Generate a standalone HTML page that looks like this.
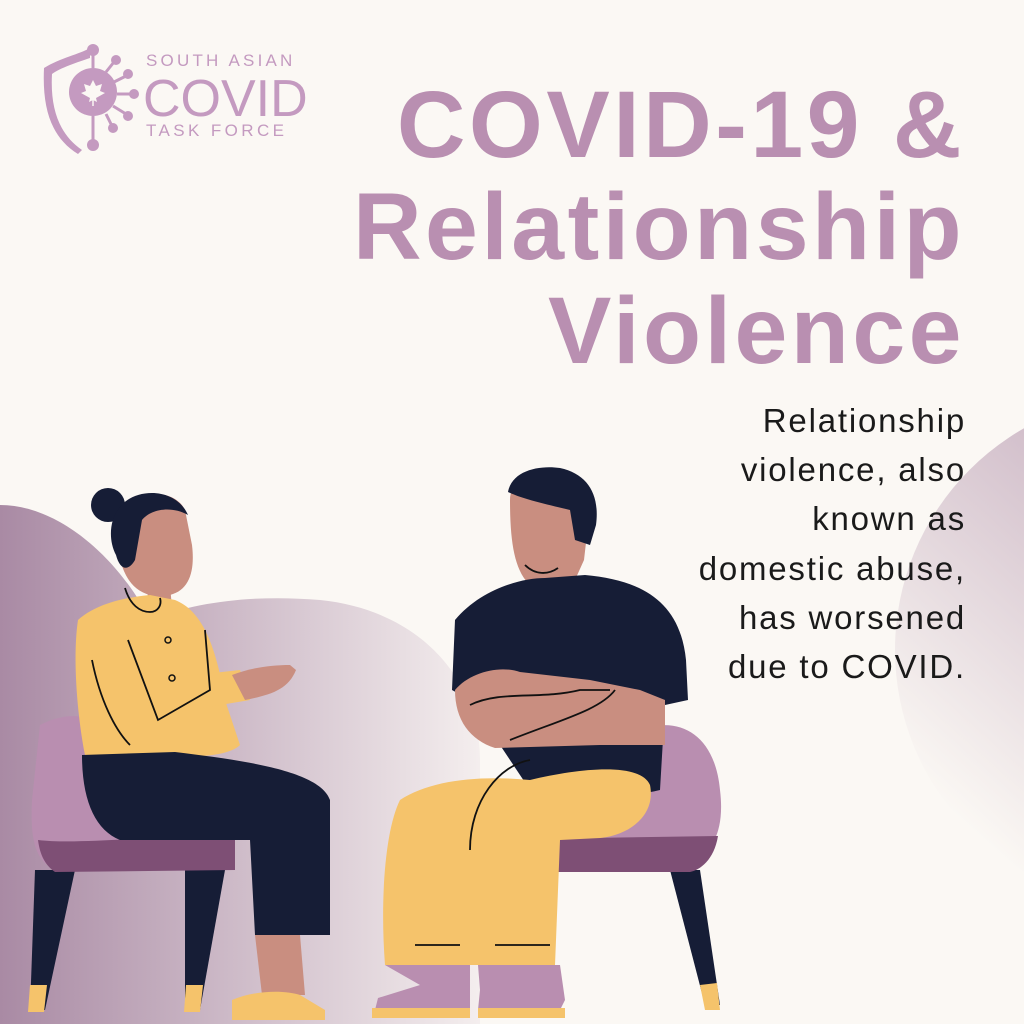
<!DOCTYPE html>
<html><head><meta charset="utf-8"><style>
html,body{margin:0;padding:0}
body{width:1024px;height:1024px;background:#fbf8f4;position:relative;overflow:hidden;font-family:"Liberation Sans",sans-serif}
svg{position:absolute;left:0;top:0}
.t{position:absolute;right:59px;text-align:right;color:#b98fb1;font-weight:bold;font-size:95px;letter-spacing:3.5px;line-height:1;white-space:nowrap}
.b{position:absolute;right:58px;top:396px;text-align:right;font-size:33px;letter-spacing:1.8px;line-height:49.2px;color:#1a1a1a}
.lg{position:absolute;color:#c49ac0;white-space:nowrap}
</style></head><body>
<svg width="1024" height="1024" viewBox="0 0 1024 1024">
<defs>
<linearGradient id="g1" x1="0" x2="1" y1="0" y2="0"><stop offset="0" stop-color="#a98aa4"/><stop offset="1" stop-color="#f4eeee"/></linearGradient>
<linearGradient id="g2" x1="1" y1="0" x2="0.2" y2="0.9"><stop offset="0" stop-color="#b191aa"/><stop offset="1" stop-color="#fbf8f4"/></linearGradient>
</defs>
<circle cx="1150" cy="650" r="255" fill="url(#g2)"/>
<path d="M0 505 C60 505 120 560 150 620 C200 600 260 595 320 600 C420 610 480 680 480 760 L480 1024 L0 1024Z" fill="url(#g1)"/>
<!-- left chair -->
<path d="M35 870 L75 870 L45 1010 L30 1010Z" fill="#161d36"/>
<path d="M185 870 L225 870 L200 1010 L185 1010Z" fill="#161d36"/>
<path d="M30 985 L47 985 L44 1012 L28 1012Z" fill="#f5c36b"/>
<path d="M186 985 L203 985 L200 1012 L184 1012Z" fill="#f5c36b"/>
<path d="M40 725 C80 705 110 720 118 760 L120 800 L235 810 L235 870 L55 870 C35 860 30 840 32 800Z" fill="#b98eb0"/>
<path d="M38 840 C80 845 160 835 235 835 L235 870 L55 872 C45 865 40 855 38 840Z" fill="#7e4f75"/>
<!-- right chair -->
<path d="M670 870 L700 870 L720 1005 L705 1005Z" fill="#161d36"/>
<path d="M700 985 L717 983 L720 1010 L705 1010Z" fill="#f5c36b"/>
<path d="M640 730 C680 715 715 735 720 790 C725 830 712 850 700 855 L470 860 L470 835 L620 830Z" fill="#b98eb0"/>
<path d="M462 840 L718 836 C714 860 700 870 690 872 L470 872Z" fill="#7e4f75"/>
<!-- woman -->
<circle cx="108" cy="505" r="17" fill="#161d36"/>
<path d="M122 505 C135 490 175 488 185 510 L192 545 C195 570 190 590 170 595 L150 595 C130 590 120 570 118 545Z" fill="#c98e80"/>
<path d="M118 510 C130 488 175 485 188 515 C170 505 150 510 142 520 L135 560 C128 572 120 570 116 555 C108 540 110 520 118 510Z" fill="#161d36"/>
<path d="M145 580 L170 585 L172 608 L150 608Z" fill="#c98e80"/>
<path d="M78 620 C95 605 120 598 150 595 L175 600 C200 610 215 640 225 700 L240 745 C230 755 200 758 170 756 L85 755 C78 720 72 660 78 620Z" fill="#f5c36b"/>
<path d="M150 680 L240 670 L250 700 L160 715Z" fill="#f5c36b"/>
<path d="M232 675 C250 668 270 665 290 665 L296 670 C288 690 270 695 245 700Z" fill="#c98e80"/>
<path d="M82 755 L175 752 C240 760 320 770 330 800 L330 935 L255 935 L250 840 L120 840 C95 830 82 800 82 755Z" fill="#161d36"/>
<path d="M255 935 L300 935 L305 995 L262 995Z" fill="#c98e80"/>
<path d="M232 1000 C255 990 285 990 300 995 L325 1010 L325 1020 L232 1020Z" fill="#f5c36b"/>
<g fill="none" stroke="#111" stroke-width="1.8">
<path d="M125 588 C130 605 140 612 150 612 C158 612 162 605 160 598"/>
<path d="M128 640 L158 720 L210 690 L205 630"/>
<path d="M92 660 C100 700 115 730 130 745"/>
</g>
<circle cx="168" cy="640" r="3" fill="none" stroke="#111" stroke-width="1.5"/>
<circle cx="172" cy="678" r="3" fill="none" stroke="#111" stroke-width="1.5"/>
<!-- man -->
<path d="M510 500 C510 482 528 475 548 476 C572 477 590 495 588 525 L584 560 L575 580 L528 583 C514 568 510 540 510 500Z" fill="#c98e80"/>
<path d="M508 492 C512 470 540 465 560 468 C588 474 600 495 596 525 L590 545 L575 540 L570 510 C550 505 525 500 508 492Z" fill="#161d36"/>
<path d="M455 620 C480 590 520 578 545 578 L585 575 C640 580 680 600 686 660 L688 700 L665 705 L660 790 C620 800 560 795 530 790 L470 700 L452 690Z" fill="#161d36"/>
<path d="M455 690 C470 672 500 665 520 672 L590 680 L640 690 L665 700 L665 745 L600 745 L495 748 C470 740 455 720 455 690Z" fill="#c98e80"/>
<path d="M530 780 C580 768 640 762 650 785 C656 815 630 835 600 838 L560 840 L555 965 L385 965 C380 900 385 830 400 800 C430 780 480 775 530 780Z" fill="#f5c36b"/>
<path d="M385 965 L470 965 L470 1010 L375 1010 L378 998 L420 985Z" fill="#b98eb0"/>
<path d="M478 965 L560 965 L565 1000 L560 1010 L478 1010 L480 990Z" fill="#b98eb0"/>
<path d="M372 1008 L470 1008 L470 1018 L372 1018Z M478 1008 L565 1008 L565 1018 L478 1018Z" fill="#f5c36b"/>
<g fill="none" stroke="#111" stroke-width="1.8">
<path d="M470 705 C500 690 540 700 580 690 L610 690"/>
<path d="M510 740 C560 720 600 710 615 690"/>
<path d="M530 760 C500 765 470 800 470 850"/>
<path d="M415 945 L460 945 M495 945 L550 945"/>
<path d="M525 565 C535 575 548 575 558 568"/>
</g>
</svg>

<!-- logo -->
<svg width="140" height="160" viewBox="0 0 140 160" style="left:30px;top:30px">
<g fill="#c49ac0" stroke="#c49ac0">
<path d="M14 38 C30 28 50 24 60 18 L60 28 C48 32 30 38 22 44 C20 80 30 105 52 120 L48 124 C22 108 12 80 14 38Z" stroke="none"/>
<circle cx="63" cy="62" r="24" stroke="none"/>
<g stroke-width="3" fill="none">
<path d="M63 38 L63 22 M76 42 L84 32 M84 52 L96 46 M87 64 L102 64 M83 76 L96 84 M76 84 L82 96 M63 86 L63 112"/>
</g>
<circle cx="63" cy="20" r="6" stroke="none"/><circle cx="86" cy="30" r="5" stroke="none"/><circle cx="98" cy="44" r="5" stroke="none"/><circle cx="104" cy="64" r="5" stroke="none"/><circle cx="98" cy="86" r="5" stroke="none"/><circle cx="83" cy="98" r="5" stroke="none"/><circle cx="63" cy="115" r="6" stroke="none"/>
</g>
<path d="M63 50 L66 56 L72 54 L70 61 L75 63 L66 68 L67 72 L63 70 L59 72 L60 68 L51 63 L56 61 L54 54 L60 56Z" fill="#fbf8f4"/>
<path d="M63 68 L63 76" stroke="#fbf8f4" stroke-width="1.5"/>
</svg>
<div class="lg" style="left:146px;top:51px;font-size:17px;letter-spacing:3.2px">SOUTH ASIAN</div>
<div class="lg" style="left:143px;top:73px;font-size:52px;letter-spacing:0px;line-height:1">COVID</div>
<div class="lg" style="left:146px;top:121px;font-size:17px;letter-spacing:3.4px">TASK FORCE</div>

<div class="t" style="top:78px">COVID-19 &amp;</div>
<div class="t" style="top:180px">Relationship</div>
<div class="t" style="top:284px">Violence</div>
<div class="b">Relationship<br>violence, also<br>known as<br>domestic abuse,<br>has worsened<br>due to COVID.</div>
</body></html>
